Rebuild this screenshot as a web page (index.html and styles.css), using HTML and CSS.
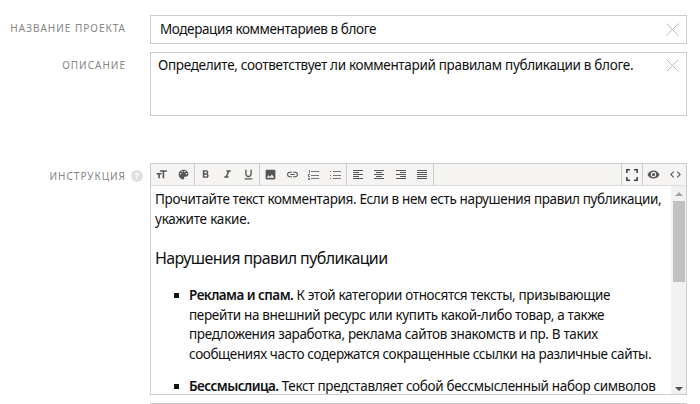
FILE: index.html
```html
<!DOCTYPE html>
<html lang="ru">
<head>
<meta charset="utf-8">
<title>Проект</title>
<link rel="stylesheet" href="styles.css">
</head>
<body>
<main class="form">
  <div class="row row-name">
    <label class="label label-name">Название проекта</label>
    <div class="field name"><span class="l-name">Модерация комментариев в блоге</span>
      <svg class="clear" viewBox="0 0 13 13"><path d="M.5.5l12 12M12.5.5l-12 12"/></svg></div>
  </div>
  <div class="row row-desc">
    <label class="label">Описание</label>
    <div class="field desc"><span class="l-desc">Определите, соответствует ли комментарий правилам публикации в блоге.</span>
      <svg class="clear" viewBox="0 0 13 13"><path d="M.5.5l12 12M12.5.5l-12 12"/></svg></div>
  </div>
  <div class="row row-editor">
    <div class="label with-help"><span>Инструкция</span><span class="help">?</span></div>
    <div class="editor">
      <div class="toolbar">
        <div class="group">
          <i class="tool"><svg viewBox="0 0 24 24"><path d="M9 4v3h5v12h3V7h5V4H9zm-6 8h3v7h3v-7h3V9H3v3z"/></svg></i>
          <i class="tool"><svg viewBox="0 0 24 24"><path d="M12 3a9 9 0 0 0 0 18c.83 0 1.500-.67 1.500-1.500 0-.39-.15-.74-.39-1.010-.23-.26-.38-.61-.38-.99 0-.83.67-1.500 1.500-1.500H16c2.760 0 5-2.240 5-5 0-4.420-4.030-8-9-8zm-5.500 9a1.500 1.500 0 1 1 0-3 1.500 1.500 0 0 1 0 3zm3-4a1.500 1.500 0 1 1 0-3 1.500 1.500 0 0 1 0 3zm5 0a1.500 1.500 0 1 1 0-3 1.500 1.500 0 0 1 0 3zm3 4a1.500 1.500 0 1 1 0-3 1.500 1.500 0 0 1 0 3z"/></svg></i>
        </div>
        <div class="group">
          <i class="tool"><svg viewBox="0 0 24 24"><path d="M15.600 10.790c.97-.67 1.650-1.770 1.650-2.790 0-2.260-1.750-4-4-4H7v14h7.040c2.090 0 3.710-1.700 3.710-3.790 0-1.520-.86-2.820-2.150-3.420zM10 6.500h3a1.500 1.500 0 0 1 0 3h-3v-3zm3.500 9H10v-3h3.500a1.500 1.500 0 0 1 0 3z"/></svg></i>
          <i class="tool"><svg viewBox="0 0 24 24"><path d="M10 4v3h2.210l-3.420 8H6v3h8v-3h-2.210l3.420-8H18V4z"/></svg></i>
          <i class="tool"><svg viewBox="0 0 24 24"><path d="M12 17c3.310 0 6-2.690 6-6V3h-2.500v8a3.500 3.500 0 0 1-7 0V3H6v8c0 3.310 2.690 6 6 6zm-7 2v2h14v-2H5z"/></svg></i>
        </div>
        <div class="group">
          <i class="tool"><svg viewBox="0 0 24 24"><path d="M21 19V5c0-1.100-.9-2-2-2H5c-1.100 0-2 .9-2 2v14c0 1.100.9 2 2 2h14c1.100 0 2-.9 2-2zM8.500 13.500l2.500 3.010L14.500 12l4.500 6H5l3.500-4.500z"/></svg></i>
          <i class="tool"><svg viewBox="0 0 24 24"><path d="M3.900 12A3.100 3.100 0 0 1 7 8.900h4V7H7a5 5 0 0 0 0 10h4v-1.900H7A3.100 3.100 0 0 1 3.900 12zM8 13h8v-2H8v2zm9-6h-4v1.900h4a3.100 3.100 0 0 1 0 6.200h-4V17h4a5 5 0 0 0 0-10z"/></svg></i>
          <i class="tool"><svg class="lines light" viewBox="0 0 11 10"><path d="M3 1h8v1H3zM3 5h8v1H3zM3 8h8v1H3zM1 0h1v3H1zM0 4h2v1H1v1h1v1H0zM0 8h2v2H0z"/></svg></i>
          <i class="tool"><svg class="lines light" viewBox="0 0 11 10"><path d="M3 1h8v1H3zM3 5h8v1H3zM3 8h8v1H3zM0 1h1v1H0zM0 5h1v1H0zM0 8h1v1H0z"/></svg></i>
        </div>
        <div class="group">
          <i class="tool"><svg class="lines" viewBox="0 0 10 10"><path d="M0 0h10v1H0zM0 2h6v1H0zM0 4h10v1H0zM0 6h6v1H0zM0 8h10v1H0z"/></svg></i>
          <i class="tool"><svg class="lines" viewBox="0 0 10 10"><path d="M0 0h10v1H0zM2 2h6v1H2zM0 4h10v1H0zM2 6h6v1H2zM0 8h10v1H0z"/></svg></i>
          <i class="tool"><svg class="lines" viewBox="0 0 10 10"><path d="M0 0h10v1H0zM4 2h6v1H4zM0 4h10v1H0zM4 6h6v1H4zM0 8h10v1H0z"/></svg></i>
          <i class="tool"><svg class="lines" viewBox="0 0 10 10"><path d="M0 0h10v1H0zM0 2h10v1H0zM0 4h10v1H0zM0 6h10v1H0zM0 8h10v1H0z"/></svg></i>
        </div>
        <div class="group right">
          <i class="tool"><svg class="full" viewBox="0 0 12 12"><path d="M.8 4V.8H4M8 .8h3.200V4M11.200 8v3.200H8M4 11.200H.8V8"/></svg></i>
        </div>
        <div class="group last">
          <i class="tool"><svg viewBox="0 0 24 24"><path d="M12 4.500C7 4.500 2.730 7.610 1 12c1.730 4.390 6 7.500 11 7.500s9.270-3.110 11-7.500c-1.730-4.390-6-7.500-11-7.500zM12 17a5 5 0 1 1 0-10 5 5 0 0 1 0 10zm0-8a3 3 0 1 0 0 6 3 3 0 0 0 0-6z"/></svg></i>
          <i class="tool"><svg viewBox="0 0 24 24"><path d="M9.400 16.600L4.800 12l4.600-4.600L8 6l-6 6 6 6 1.400-1.400zm5.200 0l4.600-4.600-4.600-4.600L16 6l6 6-6 6-1.400-1.400z"/></svg></i>
        </div>
      </div>
      <div class="pane">
        <div class="content">
          <p><span class="l-p1">Прочитайте текст комментария. Если в нем есть нарушения правил публикации,</span><br><span class="l-p2">укажите какие.</span></p>
          <h2>Нарушения правил публикации</h2>
          <ul>
            <li><b>Реклама и спам.</b> К этой категории относятся тексты, призывающие<br>перейти на внешний ресурс или купить какой-либо товар, а также<br>предложения заработка, реклама сайтов знакомств и пр. В таких<br><span class="l-a4">сообщениях часто содержатся сокращенные ссылки на различные сайты.</span></li>
            <li><b>Бессмыслица.</b> <span class="l-b1">Текст представляет собой бессмысленный набор символов</span></li>
          </ul>
        </div>
        <div class="scroll"><span class="up"></span><span class="thumb"></span><span class="down"></span></div>
      </div>
    </div>
  </div>
  <div class="row"><div class="next"></div></div>
</main>
</body>
</html>
```

FILE: styles.css
```css
* { box-sizing: border-box; }
body { margin: 0; width: 700px; height: 404px; overflow: hidden; background: #fff; color: #111; font: 13.5px/20px "Noto Sans", sans-serif; }
.form { padding-top: 15px; width: 687px; }
.row { display: grid; grid-template-columns: 150px 537px; }
.row-name { margin-bottom: 8px; }
.row-desc { margin-bottom: 47px; }
.label { padding-right: 24px; padding-top: 3px; text-align: right; text-transform: uppercase; font-size: 10px; line-height: 20px; letter-spacing: 1px; color: #858585; white-space: nowrap; }
.with-help { display: flex; justify-content: flex-end; align-items: flex-start; gap: 5px; padding-right: 7px; }
.help { width: 12px; height: 12px; margin-top: 4px; border-radius: 50%; background: #e0e0e0; color: #fff; font-size: 9px; font-weight: 700; line-height: 12px; text-align: center; letter-spacing: 0; }
.field { display: flex; justify-content: space-between; border: 1px solid #ccc; white-space: nowrap; }
.name { height: 29px; padding: 3px 7px 0 9px; letter-spacing: -.4px; }
.desc { height: 64px; padding: 2px 7px 0; letter-spacing: -.32px; }
.clear { width: 13px; height: 13px; margin-top: 4px; fill: none; stroke: #bbb; stroke-width: 1; }
.name .clear { margin-top: 4px; }
.editor { height: 232px; border: 1px solid #ccc; }
.toolbar { display: flex; height: 22px; background: #f5f4f2; border-bottom: 1px solid #ddd; }
.group { display: flex; border-right: 1px solid #ccc; }
.right { margin-left: auto; border-left: 1px solid #ccc; }
.last { border-right: 0; }
.tool { display: flex; width: 21.450px; justify-content: center; align-items: center; }
.tool svg { width: 13px; height: 13px; fill: #555; }
.right .tool { width: 20.500px; }
.tool .lines { width: 10px; height: 10px; shape-rendering: crispEdges; }
.tool .light { width: 11px; fill: #777; }
.tool .full { width: 12px; height: 12px; fill: none; stroke: #444; stroke-width: 1.600; }
.pane { display: flex; height: 208px; overflow: hidden; }
.content { flex: 1; padding: 3px 0 0 4px; white-space: nowrap; overflow: hidden; }
p { margin: 0; line-height: 20px; letter-spacing: -.36px; }
.l-p2 { letter-spacing: -.2px; }
h2 { margin: 18px 0 17px; font-size: 16px; line-height: 22px; font-weight: 400; letter-spacing: -.6px; }
ul { margin: 0; padding: 0 0 0 34px; list-style: none; letter-spacing: -.345px; }
.l-a4 { letter-spacing: -.38px; }
.l-b1 { letter-spacing: -.33px; }
li { position: relative; margin-bottom: 13px; line-height: 19.600px; }
li::before { content: ""; position: absolute; left: -15px; top: 7px; width: 5px; height: 5px; background: #111; }
b { font-weight: 600; letter-spacing: -.55px; }
.scroll { display: flex; flex-direction: column; align-items: center; width: 15px; background: #f1f1f1; }
.up, .down { border: 4px solid transparent; }
.up { margin-top: 2px; height: 8px; border-bottom-color: #a3a3a3; border-top: 0; margin-bottom: 5px; }
.thumb { width: 12px; height: 81px; background: #c1c1c1; }
.down { margin-top: auto; margin-bottom: 3px; border-top-color: #505050; border-bottom: 0; }
.next { grid-column: 2; height: 10px; margin-top: 8px; border: 1px solid #ccc; }
```
